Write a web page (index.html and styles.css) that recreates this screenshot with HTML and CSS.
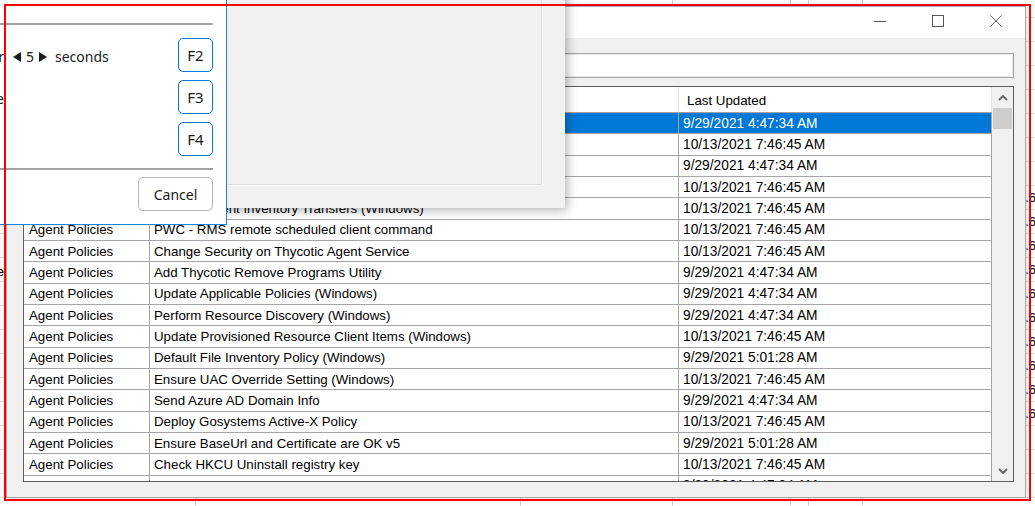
FILE: index.html
```html
<!DOCTYPE html>
<html>
<head>
<meta charset="utf-8">
<title>Agent Policies</title>
<link rel="stylesheet" href="styles.css">
</head>
<body>
<div class="desk">
  <div class="sheet-right">
    <span>0.6</span><span>0.6</span><span>0.6</span><span>0.6</span><span>0.6</span>
    <span>0.6</span><span>0.6</span><span>0.6</span><span>0.6</span><span>0.6</span>
  </div>
  <div class="sheet-left"><span>Value</span></div>

  <div class="main">
    <div class="titlebar">
      <div class="capbtn"><svg width="12" height="12" viewBox="0 0 12 12"><path d="M0 6.5H12" stroke="#555" stroke-width="1"/></svg></div>
      <div class="capbtn"><svg width="12" height="12" viewBox="0 0 12 12"><rect x="0.5" y="0.5" width="11" height="11" fill="none" stroke="#555" stroke-width="1"/></svg></div>
      <div class="capbtn"><svg width="12" height="12" viewBox="0 0 12 12"><path d="M0.5 0.5L11.5 11.5M11.5 0.5L0.5 11.5" stroke="#666" stroke-width="1"/></svg></div>
    </div>
    <div class="winbody">
      <div class="search"></div>
      <div class="grid">
        <div class="cols">
          <div class="row head"><div class="cell">Category</div><div class="cell">Name</div><div class="cell">Last Updated</div></div>
          <div class="row sel"><div class="cell">Agent Policies</div><div class="cell">Default Agent Settings</div><div class="cell date">9/29/2021 4:47:34 AM</div></div>
          <div class="row"><div class="cell">Agent Policies</div><div class="cell">Apply Resource Policies (Windows)</div><div class="cell date">10/13/2021 7:46:45 AM</div></div>
          <div class="row"><div class="cell">Agent Policies</div><div class="cell">Windows Event Log Collection</div><div class="cell date">9/29/2021 4:47:34 AM</div></div>
          <div class="row"><div class="cell">Agent Policies</div><div class="cell">Thycotic Agent Update Policy</div><div class="cell date">10/13/2021 7:46:45 AM</div></div>
          <div class="row"><div class="cell">Agent Policies</div><div class="cell">Process Client Inventory Transfers (Windows)</div><div class="cell date">10/13/2021 7:46:45 AM</div></div>
          <div class="row"><div class="cell">Agent Policies</div><div class="cell">PWC - RMS remote scheduled client command</div><div class="cell date">10/13/2021 7:46:45 AM</div></div>
          <div class="row"><div class="cell">Agent Policies</div><div class="cell">Change Security on Thycotic Agent Service</div><div class="cell date">10/13/2021 7:46:45 AM</div></div>
          <div class="row"><div class="cell">Agent Policies</div><div class="cell">Add Thycotic Remove Programs Utility</div><div class="cell date">9/29/2021 4:47:34 AM</div></div>
          <div class="row"><div class="cell">Agent Policies</div><div class="cell">Update Applicable Policies (Windows)</div><div class="cell date">9/29/2021 4:47:34 AM</div></div>
          <div class="row"><div class="cell">Agent Policies</div><div class="cell">Perform Resource Discovery (Windows)</div><div class="cell date">9/29/2021 4:47:34 AM</div></div>
          <div class="row"><div class="cell">Agent Policies</div><div class="cell">Update Provisioned Resource Client Items (Windows)</div><div class="cell date">10/13/2021 7:46:45 AM</div></div>
          <div class="row"><div class="cell">Agent Policies</div><div class="cell">Default File Inventory Policy (Windows)</div><div class="cell date">9/29/2021 5:01:28 AM</div></div>
          <div class="row"><div class="cell">Agent Policies</div><div class="cell">Ensure UAC Override Setting (Windows)</div><div class="cell date">10/13/2021 7:46:45 AM</div></div>
          <div class="row"><div class="cell">Agent Policies</div><div class="cell">Send Azure AD Domain Info</div><div class="cell date">9/29/2021 4:47:34 AM</div></div>
          <div class="row"><div class="cell">Agent Policies</div><div class="cell">Deploy Gosystems Active-X Policy</div><div class="cell date">10/13/2021 7:46:45 AM</div></div>
          <div class="row"><div class="cell">Agent Policies</div><div class="cell">Ensure BaseUrl and Certificate are OK v5</div><div class="cell date">9/29/2021 5:01:28 AM</div></div>
          <div class="row"><div class="cell">Agent Policies</div><div class="cell">Check HKCU Uninstall registry key</div><div class="cell date">10/13/2021 7:46:45 AM</div></div>
          <div class="row"><div class="cell">Agent Policies</div><div class="cell">Clean Agent Privilege Manager Events (Windows)</div><div class="cell date">9/29/2021 4:47:34 AM</div></div>
        </div>
        <div class="vscroll">
          <div class="arrow"><svg width="10" height="7" viewBox="0 0 10 7"><path d="M1 6L5 2L9 6" fill="none" stroke="#606060" stroke-width="1.8"/></svg></div>
          <div class="thumb"></div>
          <div class="track"></div>
          <div class="arrow"><svg width="10" height="7" viewBox="0 0 10 7"><path d="M1 1L5 5L9 1" fill="none" stroke="#606060" stroke-width="1.8"/></svg></div>
        </div>
      </div>
    </div>
  </div>

  <div class="back"><div class="back-inner"></div></div>

  <div class="dialog">
    <div class="sep"></div>
    <div class="opts">
      <div class="opt">
        <div class="opt-left">
          <span class="opt-label">Lock screen after</span>
          <span class="spin">
            <span class="tri-l"></span><span class="spin-val">5</span><span class="tri-r"></span>
          </span>
          <span class="unit">seconds</span>
        </div>
        <div class="fbtn">F2</div>
      </div>
      <div class="opt">
        <div class="opt-left"><span class="opt-label">Show notification on idle</span></div>
        <div class="fbtn">F3</div>
      </div>
      <div class="opt">
        <div class="opt-left"><span class="opt-label short">Restart agent</span></div>
        <div class="fbtn">F4</div>
      </div>
    </div>
    <div class="sep sep2"></div>
    <div class="actions"><div class="cancel">Cancel</div></div>
  </div>

  <div class="redbox"></div>
</div>
</body>
</html>
```
FILE: styles.css
```css
html, body {
  margin: 0;
  padding: 0;
}
body {
  width: 1035px;
  height: 506px;
  overflow: hidden;
  background: #fff;
}
.desk {
  position: relative;
  width: 1035px;
  height: 506px;
  overflow: hidden;
  font-family: "Liberation Sans", Arial, sans-serif;
  background-color: #fff;
  background-image:
    linear-gradient(#d6d6d6, #d6d6d6),
    linear-gradient(#d6d6d6, #d6d6d6),
    linear-gradient(#d6d6d6, #d6d6d6),
    linear-gradient(#d6d6d6, #d6d6d6),
    linear-gradient(#d6d6d6, #d6d6d6),
    linear-gradient(#d6d6d6, #d6d6d6),
    linear-gradient(to bottom, #dcdcdc 1px, transparent 1px);
  background-size:
    1px 100%, 1px 100%, 1px 100%, 1px 100%, 1px 100%, 1px 100%,
    100% 24px;
  background-position:
    195px 0, 520px 0, 672px 0, 790px 0, 808px 0, 862px 0,
    0 17px;
  background-repeat: no-repeat, no-repeat, no-repeat, no-repeat, no-repeat, no-repeat, repeat;
}

/* spreadsheet fragments behind */
.sheet-right {
  position: absolute;
  left: 1018px;
  top: 187px;
  display: flex;
  flex-direction: column;
  font-size: 13px;
  color: #000;
}
.sheet-right span {
  height: 24px;
  line-height: 22px;
}
.sheet-left {
  position: absolute;
  left: -60px;
  top: 263px;
  width: 64px;
  text-align: right;
  font-size: 13px;
  line-height: 18px;
  color: #000;
}

/* main window */
.main {
  position: absolute;
  left: 6px;
  top: 6px;
  width: 1020px;
  height: 492px;
  box-sizing: border-box;
  border: 1px solid #a8a8a8;
  background: #f0f0f0;
  display: flex;
  flex-direction: column;
  box-shadow: 0 0 8px rgba(0, 0, 0, 0.18);
}
.titlebar {
  height: 31px;
  flex: none;
  background: #fff;
  display: flex;
  justify-content: flex-end;
  align-items: flex-start;
}
.capbtn {
  width: 58px;
  height: 27px;
  display: flex;
  align-items: center;
  justify-content: center;
}
.capbtn svg {
  display: block;
}
.winbody {
  flex: 1;
  display: flex;
  flex-direction: column;
  padding: 15px 11px 15px 16px;
  min-height: 0;
}
.search {
  height: 25px;
  flex: none;
  box-sizing: border-box;
  border: 1px solid #a7a7a7;
  box-shadow: inset 0 0 0 1px #e8e8e8;
  background: #fff;
  margin-bottom: 8px;
}
.grid {
  flex: 1;
  min-height: 0;
  display: flex;
  border: 1px solid #5f5f5f;
  background: #fff;
  overflow: hidden;
}
.cols {
  flex: 1;
  display: flex;
  flex-direction: column;
  overflow: hidden;
}
.row {
  flex: none;
  display: grid;
  grid-template-columns: 126px 529px 313px;
  height: 21.333px;
  font-size: 13.3px;
  color: #000;
}
.cell {
  box-sizing: border-box;
  border-right: 1px solid #a6a6a6;
  border-bottom: 1px solid #a6a6a6;
  padding-left: 4px;
  white-space: nowrap;
  overflow: hidden;
  display: flex;
  align-items: center;
}
.cell:first-child {
  padding-left: 5px;
}
.cell.date {
  font-size: 13.75px;
}
.row.head {
  height: 26px;
}
.row.head .cell {
  padding-left: 8px;
  padding-top: 1px;
  border-right-color: #e3e3e3;
  border-bottom-color: #a0a0a0;
}
.row.sel .cell {
  background: #0078d7;
  color: #fff;
}
.vscroll {
  width: 21px;
  flex: none;
  background: #f0f0f0;
  display: flex;
  flex-direction: column;
}
.arrow {
  height: 20px;
  flex: none;
  display: flex;
  align-items: center;
  justify-content: center;
}
.arrow svg {
  display: block;
}
.thumb {
  height: 21px;
  flex: none;
  margin: 1px 1px 0 1px;
  background: #cdcdcd;
}
.track {
  flex: 1;
}

/* window behind the dialog */
.back {
  position: absolute;
  left: -60px;
  top: -20px;
  width: 625px;
  height: 228px;
  box-sizing: border-box;
  background: #f0f0f0;
  padding: 0 23px 23px 0;
  box-shadow: 2px 2px 10px rgba(0, 0, 0, 0.32);
}
.back-inner {
  height: 100%;
  box-sizing: border-box;
  border-right: 1px solid #dddddd;
  border-bottom: 1px solid #dddddd;
  box-shadow: 1px 1px 0 #fafafa;
}

/* dialog */
.dialog {
  position: absolute;
  left: -300px;
  top: -1px;
  width: 527px;
  height: 226px;
  box-sizing: border-box;
  border: 1px solid #1883d7;
  background: #fff;
  padding: 23px 13px 13px 20px;
  display: flex;
  flex-direction: column;
  font-family: "Noto Sans", "Open Sans", sans-serif;
  font-size: 14px;
  color: #1a1a1a;
}
.sep {
  height: 2px;
  flex: none;
  background: #a2a2a2;
}
.sep2 {
  margin-top: 12px;
}
.opts {
  margin-top: 13px;
  display: flex;
  flex-direction: column;
  gap: 8px;
}
.opt {
  height: 34px;
  display: flex;
  align-items: center;
}
.opt-left {
  display: flex;
  align-items: center;
  padding-top: 3px;
}
.opt-label {
  width: 283px;
  text-align: right;
  white-space: nowrap;
}
.opt-label.short {
  width: 270px;
}
.spin {
  display: flex;
  align-items: center;
  margin-left: 9px;
}
.tri-l {
  width: 0;
  height: 0;
  border-top: 5px solid transparent;
  border-bottom: 5px solid transparent;
  border-right: 8px solid #1a1a1a;
}
.tri-r {
  width: 0;
  height: 0;
  border-top: 5px solid transparent;
  border-bottom: 5px solid transparent;
  border-left: 8px solid #1a1a1a;
}
.spin-val {
  margin: 0 5px 0 5px;
}
.unit {
  margin-left: 8px;
}
.fbtn {
  margin-left: auto;
  width: 35px;
  height: 34px;
  box-sizing: border-box;
  border: 1px solid #0078d7;
  border-radius: 5px;
  display: flex;
  align-items: center;
  justify-content: center;
  font-size: 15px;
}
.actions {
  margin-top: 7px;
  display: flex;
  justify-content: flex-end;
}
.cancel {
  width: 75px;
  height: 34px;
  box-sizing: border-box;
  border: 1px solid #b5b5b5;
  border-radius: 5px;
  display: flex;
  align-items: center;
  justify-content: center;
  font-size: 14px;
}

/* annotation rectangle */
.redbox {
  position: absolute;
  left: 4px;
  top: 4px;
  width: 1027px;
  height: 497px;
  box-sizing: border-box;
  border: 2px solid #ff0000;
  pointer-events: none;
}
```
